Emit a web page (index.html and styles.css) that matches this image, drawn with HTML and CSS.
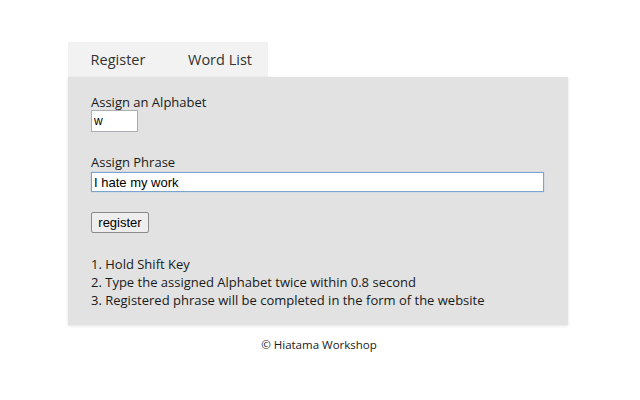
FILE: index.html
```html
<!DOCTYPE html>
<html>
<head>
<meta charset="utf-8">
<link rel="stylesheet" href="styles.css">
</head>
<body>
<div class="wrap">
  <div class="tabs">
    <div class="tab">Register</div>
    <div class="tab tab-second">Word List</div>
  </div>
  <div class="panel">
    <div class="field">
      <div class="label">Assign an Alphabet</div>
      <input class="input small" type="text" value="w">
    </div>
    <div class="field">
      <div class="label">Assign Phrase</div>
      <input class="input wide" type="text" value="I hate my work">
    </div>
    <button class="btn">register</button>
    <ol class="steps">
      <li>1. Hold Shift Key</li>
      <li>2. Type the assigned Alphabet twice within 0.8 second</li>
      <li>3. Registered phrase will be completed in the form of the website</li>
    </ol>
  </div>
  <div class="footer">© Hiatama Workshop</div>
</div>
</body>
</html>
```
FILE: styles.css
```css
html, body {
  margin: 0;
  padding: 0;
  background: #ffffff;
}
body {
  font-family: "Open Sans", "Noto Sans", sans-serif;
  font-size: 13px;
  color: #1a1a1a;
}
.wrap {
  width: 500px;
  margin: 42px 0 0 68px;
}
.tabs {
  display: flex;
  width: 200px;
  height: 35px;
  background: #f2f2f2;
}
.tab {
  width: 100px;
  display: flex;
  align-items: center;
  justify-content: center;
  font-size: 14.5px;
  color: #333;
  padding-bottom: 1px;
  box-sizing: border-box;
}
.tab-second {
  padding-left: 4px;
}
.panel {
  background: #e1e2e1;
  padding: 17px 23px 10px;
  height: 221px;
  box-shadow: 0 1px 3px rgba(0,0,0,0.12);
}
.field {
  margin-bottom: 22px;
}
.field + .field {
  margin-bottom: 20px;
}
.label {
  line-height: 16px;
}
.input {
  font-family: "Liberation Sans", Arial, sans-serif;
  font-size: 13px;
  box-sizing: border-box;
  border: 1px solid #abadb3;
  background: #fff;
  padding: 0 2px;
  margin: 0;
  display: block;
  color: #000;
  outline: none;
}
.small {
  width: 47px;
  height: 22px;
  font-size: 12px;
}
.wide {
  width: 453px;
  height: 20px;
  margin-top: 2px;
  border: 1px solid #7da2ce;
  box-shadow: 0 0 1px #9ab8dc;
}
.btn {
  font-family: "Liberation Sans", Arial, sans-serif;
  font-size: 13px;
  height: 21px;
  width: 58px;
  padding: 0;
  background: #eeeeee;
  border: 1px solid #8a8a8a;
  border-radius: 2px;
  color: #000;
  margin: 0;
  display: block;
}
.steps {
  list-style: none;
  margin: 22px 0 0;
  padding: 0;
}
.steps li {
  line-height: 18px;
}
.footer {
  text-align: center;
  font-size: 11.5px;
  margin-top: 12px;
  padding-left: 2px;
}
```
